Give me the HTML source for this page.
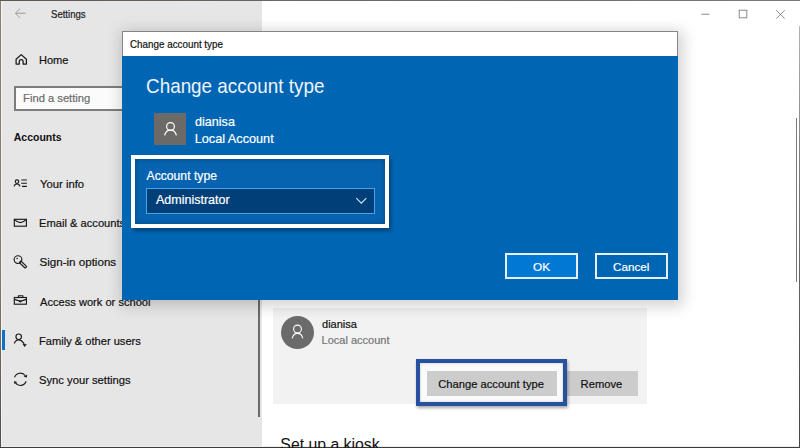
<!DOCTYPE html>
<html><head><meta charset="utf-8">
<style>
html,body{margin:0;padding:0;width:800px;height:448px;overflow:hidden;background:#fff;}
body{position:relative;font-family:"Liberation Sans",sans-serif;}
.a{position:absolute;}
.t{position:absolute;white-space:nowrap;line-height:1;}
svg{position:absolute;left:0;top:0;overflow:visible;}
</style></head><body>

<div class="a" style="left:0;top:0;width:261.5px;height:448px;background:#e6e6e6;"></div>
<div class="a" style="left:261.5px;top:0;width:538.5px;height:448px;background:#ffffff;"></div>
<div class="t" style="left:51.32px;top:9.88px;font-size:10.3px;color:#1b1b1b;transform:scaleX(0.93);transform-origin:0 0;-webkit-text-stroke:0.2px currentColor;">Settings</div>
<div class="t" style="left:39.32px;top:54.95px;font-size:11.4px;color:#111;transform:scaleX(0.97);transform-origin:0 0;-webkit-text-stroke:0.2px currentColor;">Home</div>
<div class="a" style="left:14px;top:86px;width:130px;height:25px;box-sizing:border-box;border:2px solid #7d7d7d;background:#fbfbfb;"></div>
<div class="t" style="left:23.10px;top:92.87px;font-size:11.2px;color:#6b6b6b;-webkit-text-stroke:0.2px currentColor;">Find a setting</div>
<div class="t" style="left:13.79px;top:131.66px;font-size:10.5px;font-weight:bold;color:#111;">Accounts</div>
<div class="t" style="left:39.57px;top:179.47px;font-size:11.5px;color:#111;transform:scaleX(0.98);transform-origin:0 0;-webkit-text-stroke:0.2px currentColor;">Your info</div>
<div class="t" style="left:39.11px;top:218.27px;font-size:11.5px;color:#111;transform:scaleX(0.97);transform-origin:0 0;-webkit-text-stroke:0.2px currentColor;">Email &amp; accounts</div>
<div class="t" style="left:39.44px;top:256.18px;font-size:11.6px;color:#111;-webkit-text-stroke:0.2px currentColor;">Sign-in options</div>
<div class="t" style="left:40.40px;top:297.15px;font-size:11.4px;color:#111;transform:scaleX(0.975);transform-origin:0 0;-webkit-text-stroke:0.2px currentColor;">Access work or school</div>
<div class="t" style="left:38.71px;top:336.35px;font-size:11.4px;color:#111;transform:scaleX(0.975);transform-origin:0 0;-webkit-text-stroke:0.2px currentColor;">Family &amp; other users</div>
<div class="t" style="left:39.15px;top:375.35px;font-size:11.4px;color:#111;transform:scaleX(0.985);transform-origin:0 0;-webkit-text-stroke:0.2px currentColor;">Sync your settings</div>
<div class="a" style="left:0.5px;top:330px;width:4px;height:20px;background:#0a72cc;"></div>
<svg width="800" height="448" viewBox="0 0 800 448">
<g fill="none" stroke="#9a9a9a" stroke-width="1">
<path d="M25.5 13.2H15.8M20 8.6L15.4 13.2L20 17.8"/>
</g>
<g fill="none" stroke="#8a8a8a" stroke-width="1">
<path d="M701.3 14.2H709.5"/>
<rect x="739.2" y="10.2" width="7.6" height="7.6"/>
<path d="M776.3 10.2L784.7 18.6M784.7 10.2L776.3 18.6"/>
</g>
<g fill="none" stroke="#1a1a1a" stroke-width="1.25" stroke-linejoin="round">
<path d="M16.1 64V59.3L21.2 54.6L26.4 59.3V64H23.1V61.3Q23.1 59.6 21.2 59.6Q19.3 59.6 19.3 61.3V64Z"/>
</g>
<g fill="none" stroke="#1a1a1a" stroke-width="1.15">
<circle cx="17" cy="181.6" r="1.75"/>
<path d="M14.1 186.4Q14.6 184 17 184Q19.4 184 19.9 186.4"/>
<path d="M21.2 180H26.9M21.2 183.2H26.9M22 186.3H26.9"/>
<rect x="14.3" y="219.3" width="12.1" height="6.9"/>
<path d="M14.6 219.6Q17.5 222.6 20.35 222.6Q23.2 222.6 26.1 219.6"/>
<circle cx="18" cy="259.6" r="3.85"/>
<rect x="14.3" y="297.5" width="12.1" height="6.7"/>
<path d="M18.5 297.5V295.7H22.8V297.5"/>
<path d="M14.5 299.4L20.35 301.4L26.2 299.4"/>
<circle cx="18.7" cy="336.7" r="2.75"/>
<path d="M14.2 343.4Q15.8 339.8 18.6 339.8Q21.6 339.8 24.2 343.9"/>
<path d="M14.6 377.4A6 6 0 0 1 25.3 375.8"/>
<path d="M26.1 381.3A6 6 0 0 1 15.5 382.9"/>
</g>
<circle cx="17.1" cy="258.6" r="0.75" fill="#1a1a1a"/>
<path d="M20.8 262.4L25.3 266.7" stroke="#1a1a1a" stroke-width="3.4" stroke-linecap="round"/>
<path d="M21.2 262.8L25.3 266.7" stroke="#e6e6e6" stroke-width="1.1" stroke-linecap="round"/>
<ellipse cx="20.3" cy="301.3" rx="1.4" ry="1.1" fill="#1a1a1a"/>
<path d="M22.6 343.9L26.8 344.3L24.6 346.9Z" fill="#1a1a1a"/>
<path d="M23.6 376.8L27.1 374.6L26.9 377.6Z" fill="#1a1a1a"/>
<path d="M14.1 381.1L14.2 384L17.2 381.9Z" fill="#1a1a1a"/>
</svg>
<div class="a" style="left:0;top:0;width:800px;height:1px;background:linear-gradient(90deg,#5e5650,#6a6460 30%,#707070 70%,#7a7a7a);"></div>
<div class="a" style="left:0;top:1px;width:1px;height:447px;background:linear-gradient(#8a7c76,#85786f 60%,#4e4e4e);"></div>
<div class="a" style="left:1px;top:1px;width:1px;height:446px;background:#f6f2f2;"></div>
<div class="a" style="left:0;top:447px;width:800px;height:1px;background:#3c3c3c;"></div>
<div class="a" style="left:2px;top:446px;width:797px;height:1px;background:#ececec;"></div>
<div class="a" style="left:799px;top:26px;width:1px;height:422px;background:linear-gradient(#b4b4b4,#7a7a7a 35%,#5a5a5a 70%,#444);"></div>
<div class="a" style="left:796px;top:118px;width:1.4px;height:163.5px;background:#7a7a7a;"></div>
<div class="a" style="left:258.3px;top:290px;width:1.4px;height:126.5px;background:#6a6a6a;"></div>
<div class="a" style="left:273px;top:308px;width:374px;height:96px;background:#f2f2f2;"></div>
<div class="a" style="left:281px;top:315.5px;width:33px;height:33px;border-radius:50%;background:#6b6b6b;"></div>
<svg width="800" height="448"><g fill="none" stroke="#fff" stroke-width="1.1">
<circle cx="297.5" cy="329" r="3.9"/><path d="M292.2 338.3Q293.5 333.4 297.5 333.4Q301.5 333.4 302.8 338.3"/></g></svg>
<div class="t" style="left:322.06px;top:319.49px;font-size:11.0px;color:#111;-webkit-text-stroke:0.2px currentColor;">dianisa</div>
<div class="t" style="left:321.62px;top:335.49px;font-size:11.0px;color:#767676;-webkit-text-stroke:0.2px currentColor;">Local account</div>
<div class="a" style="left:420px;top:363px;width:143.5px;height:39.5px;background:#fbfbfb;"></div>
<div class="a" style="left:426.8px;top:371.2px;width:130.4px;height:25px;background:#cccccc;"></div>
<div class="t" style="left:438.19px;top:379.02px;font-size:11.2px;color:#111;-webkit-text-stroke:0.2px currentColor;">Change account type</div>
<div class="a" style="left:566px;top:371.2px;width:72px;height:25px;background:#cccccc;"></div>
<div class="t" style="left:580.60px;top:379.17px;font-size:11.2px;color:#111;-webkit-text-stroke:0.2px currentColor;">Remove</div>
<div class="a" style="left:416.3px;top:359px;width:150.9px;height:47.3px;box-sizing:border-box;border:4px solid #27509f;box-shadow:1px 2px 3px rgba(0,0,0,0.35), inset 0 0 3px rgba(0,0,0,0.22);"></div>
<div class="t" style="left:280.37px;top:437.33px;font-size:15.8px;color:#111;">Set up a kiosk</div>
<div class="a" style="left:122px;top:31px;width:556px;height:269px;box-shadow:2px 3px 14px 3px rgba(0,0,0,0.18);"></div>
<div class="a" style="left:122px;top:31px;width:556px;height:25px;box-sizing:border-box;background:#fff;border:1px solid #858585;border-bottom:none;"></div>
<div class="t" style="left:129.71px;top:40.08px;font-size:10.3px;color:#111;transform:scaleX(0.955);transform-origin:0 0;-webkit-text-stroke:0.2px currentColor;">Change account type</div>
<div class="a" style="left:122px;top:56px;width:556px;height:244px;background:#0066b4;"></div>
<div class="t" style="left:146.06px;top:75.60px;font-size:20.2px;color:#eef4fa;transform:scaleX(0.935);transform-origin:0 0;">Change account type</div>
<div class="a" style="left:154px;top:113px;width:32px;height:32px;background:#6b6a69;"></div>
<svg width="800" height="448"><g fill="none" stroke="#fff" stroke-width="1.2">
<circle cx="170.5" cy="126.5" r="3.9"/><path d="M164.6 135.4Q165.8 130.1 170.5 130.1Q175.2 130.1 176.4 135.4"/></g></svg>
<div class="t" style="left:195.00px;top:115.63px;font-size:12.6px;color:#fff;-webkit-text-stroke:0.2px currentColor;">dianisa</div>
<div class="t" style="left:194.68px;top:133.05px;font-size:12.7px;color:#fff;-webkit-text-stroke:0.2px currentColor;">Local Account</div>
<div class="a" style="left:131px;top:155px;width:258px;height:73px;box-sizing:border-box;border:4px solid #fff;background:#0663b0;box-shadow:2px 3px 4px rgba(0,0,0,0.35), inset 0 0 5px rgba(0,0,0,0.3);"></div>
<div class="t" style="left:146.50px;top:169.92px;font-size:12.2px;color:#fff;-webkit-text-stroke:0.2px currentColor;">Account type</div>
<div class="a" style="left:146px;top:188px;width:229px;height:26px;box-sizing:border-box;border:1px solid #4aa0e6;background:#003f77;"></div>
<div class="t" style="left:156.00px;top:194.42px;font-size:12.5px;color:#fff;-webkit-text-stroke:0.2px currentColor;">Administrator</div>
<svg width="800" height="448"><path d="M356.3 198.1L361.3 203.1L366.3 198.1" fill="none" stroke="#d8e8f6" stroke-width="1.1"/></svg>
<div class="a" style="left:505px;top:253px;width:73px;height:26px;box-sizing:border-box;border:2px solid #e6f0fa;background:#0078d4;"></div>
<div class="t" style="left:533.03px;top:261.86px;font-size:11.8px;color:#fff;-webkit-text-stroke:0.2px currentColor;">OK</div>
<div class="a" style="left:594.5px;top:253px;width:73.5px;height:26px;box-sizing:border-box;border:2px solid #e6f0fa;background:#0066b4;"></div>
<div class="t" style="left:613.02px;top:261.86px;font-size:11.8px;color:#fff;transform:scaleX(0.99);transform-origin:0 0;-webkit-text-stroke:0.2px currentColor;">Cancel</div>
</body></html>
